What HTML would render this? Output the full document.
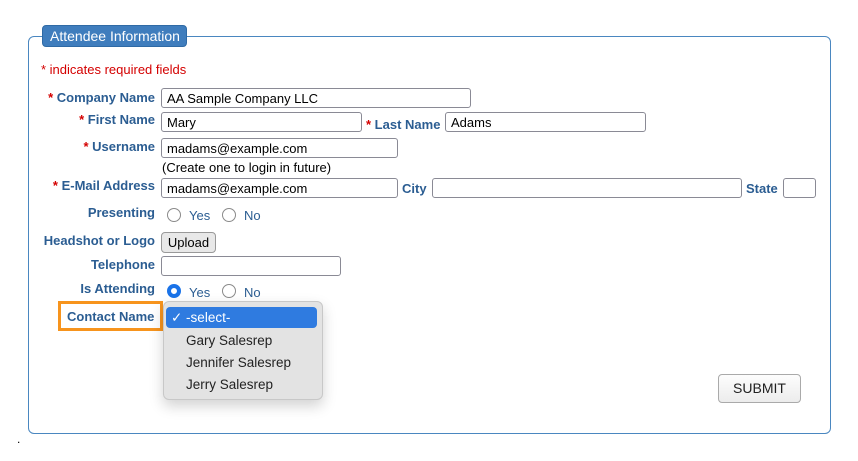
<!DOCTYPE html>
<html><head><style>
body{margin:0;width:858px;height:461px;background:#fff;position:relative;overflow:hidden;font-family:"Liberation Sans",Arial,sans-serif;}
.a{position:absolute;white-space:nowrap}
.lb{position:absolute;font-size:13px;font-weight:bold;color:#2b5d92;white-space:nowrap}
.lr{text-align:right;right:703px}
.r{color:#d40000}
.in{position:absolute;border:1px solid #8a8a95;border-radius:3px;background:#fff;height:20px;box-sizing:border-box;font-size:13px;color:#000;padding:2px 0 0 5px;line-height:15px}
.rad{position:absolute;width:14px;height:14px;border:1px solid #8a8a8a;border-radius:50%;box-sizing:border-box;background:#fff}
.rt{position:absolute;font-size:13px;color:#2b5d92}
</style></head><body>
<div class="a" style="left:28px;top:36px;width:801px;height:396px;border:1px solid #4a87c0;border-radius:6px"></div>
<div class="a" style="left:42px;top:25px;width:145px;height:22px;background:#3f7dbd;border:1px solid #2f6aa5;border-radius:4px;box-sizing:border-box;color:#fff;font-size:14px;line-height:20px;padding-left:7px">Attendee Information</div>
<div class="a r" style="left:41px;top:62px;font-size:13px">* indicates required fields</div>

<div class="lb lr" style="top:90px"><span class="r">* </span>Company Name</div>
<div class="in" style="left:161px;top:88px;width:310px">AA Sample Company LLC</div>

<div class="lb lr" style="top:112px"><span class="r">* </span>First Name</div>
<div class="in" style="left:161px;top:112px;width:201px">Mary</div>
<div class="lb" style="left:366px;top:117px"><span class="r">* </span>Last Name</div>
<div class="in" style="left:445px;top:112px;width:201px">Adams</div>

<div class="lb lr" style="top:139px"><span class="r">* </span>Username</div>
<div class="in" style="left:161px;top:138px;width:237px">madams@example.com</div>
<div class="a" style="left:162px;top:160px;font-size:13px">(Create one to login in future)</div>

<div class="lb lr" style="top:178px"><span class="r">* </span>E-Mail Address</div>
<div class="in" style="left:161px;top:178px;width:237px">madams@example.com</div>
<div class="lb" style="left:402px;top:181px">City</div>
<div class="in" style="left:432px;top:178px;width:310px"></div>
<div class="lb" style="left:746px;top:181px">State</div>
<div class="in" style="left:783px;top:178px;width:33px"></div>

<div class="lb lr" style="top:205px">Presenting</div>
<div class="rad" style="left:167px;top:208px"></div><div class="rt" style="left:189px;top:208px">Yes</div>
<div class="rad" style="left:222px;top:208px"></div><div class="rt" style="left:244px;top:208px">No</div>

<div class="lb lr" style="top:233px">Headshot or Logo</div>
<div class="a" style="left:161px;top:232px;width:55px;height:21px;border:1px solid #999;border-radius:4px;background:#e8e8e8;box-sizing:border-box;font-size:13px;text-align:center;line-height:19px">Upload</div>

<div class="lb lr" style="top:257px">Telephone</div>
<div class="in" style="left:161px;top:256px;width:180px"></div>

<div class="lb lr" style="top:281px">Is Attending</div>
<div class="rad" style="left:167px;top:284px;border:4px solid #1a73e8"></div><div class="rt" style="left:189px;top:285px">Yes</div>
<div class="rad" style="left:222px;top:284px"></div><div class="rt" style="left:244px;top:285px">No</div>

<div class="a" style="left:58px;top:301px;width:105px;height:30px;border:3px solid #f7941d;box-sizing:border-box"></div>
<div class="lb" style="left:67px;top:309px">Contact Name</div>

<div class="a" style="left:163px;top:301px;width:160px;height:99px;background:#e3e3e3;border:1px solid #c8c8c8;border-radius:6px;box-sizing:border-box;box-shadow:0 6px 14px rgba(0,0,0,0.18)"></div>
<div class="a" style="left:166px;top:307px;width:151px;height:21px;background:#2f7be0;border-radius:4px;color:#fff;font-size:13.5px;line-height:21px;padding-left:5px;box-sizing:border-box">✓ -select-</div>
<div class="a" style="left:186px;top:333px;font-size:13.5px;color:#222">Gary Salesrep</div>
<div class="a" style="left:186px;top:355px;font-size:13.5px;color:#222">Jennifer Salesrep</div>
<div class="a" style="left:186px;top:377px;font-size:13.5px;color:#222">Jerry Salesrep</div>

<div class="a" style="left:718px;top:374px;width:83px;height:29px;border:1px solid #aaa;border-radius:4px;background:linear-gradient(#fdfdfd,#ececec);box-sizing:border-box;font-size:14px;text-align:center;line-height:27px;color:#222">SUBMIT</div>
<div class="a" style="left:17px;top:432px;font-size:12px">.</div>
</body></html>
